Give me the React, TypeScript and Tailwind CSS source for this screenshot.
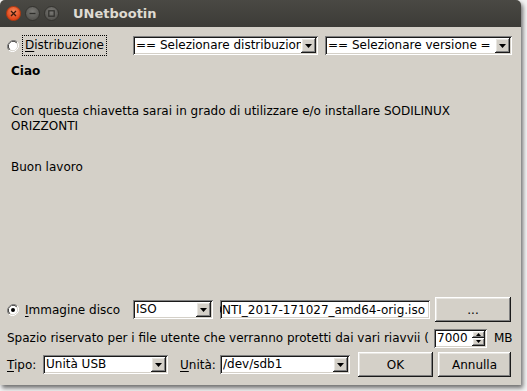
import React from 'react'

const font = "font-['DejaVu_Sans',sans-serif]"
const sunken =
  'bg-white shadow-[inset_1px_1px_#808080,inset_-1px_-1px_#ffffff,inset_2px_2px_#1a1a1a,inset_-2px_-2px_#d4d0c8]'
const raised =
  'bg-[#d4d0c8] shadow-[inset_-1px_-1px_#1a1a1a,inset_1px_1px_#ffffff,inset_-2px_-2px_#808080,inset_2px_2px_#e8e6e1]'

function Radio({ checked }: { checked?: boolean }) {
  return (
    <svg width="12" height="12" viewBox="0 0 12 12" className="shrink-0">
      <path d="M10.2 1.8A6 6 0 0 0 1.8 10.2" stroke="#808080" strokeWidth="1" fill="none" />
      <path d="M9.5 2.5A5 5 0 0 0 2.5 9.5" stroke="#1a1a1a" strokeWidth="1" fill="none" />
      <path d="M1.8 10.2A6 6 0 0 0 10.2 1.8" stroke="#ffffff" strokeWidth="1" fill="none" />
      <circle cx="6" cy="6" r="4.2" fill="#ffffff" />
      {checked && <circle cx="6" cy="6" r="2" fill="#000000" />}
    </svg>
  )
}

function Arrow() {
  return (
    <div className={`${raised} w-[15px] h-[15px] flex items-center justify-center shrink-0`}>
      <svg width="7" height="4" viewBox="0 0 7 4">
        <path d="M0 0h7L3.5 4z" fill="#000" />
      </svg>
    </div>
  )
}

function Select({ value, className }: { value: string; className?: string }) {
  return (
    <div className={`${sunken} h-[19px] flex items-center pl-[3px] pr-[2px] ${className ?? ''}`}>
      <span className="flex-1 overflow-hidden whitespace-nowrap leading-[15px]">{value}</span>
      <Arrow />
    </div>
  )
}

function Button({ label, className }: { label: string; className?: string }) {
  return (
    <div className={`${raised} h-[25px] flex items-center justify-center ${className ?? ''}`}>
      {label}
    </div>
  )
}

function TitleButton({ kind }: { kind: 'close' | 'min' | 'max' }) {
  if (kind === 'close') {
    return (
      <div className="w-[15px] h-[15px] rounded-full bg-[radial-gradient(circle_at_50%_35%,#f58a5c,#e0461a_70%)] border border-[#b8390f] flex items-center justify-center">
        <svg width="7" height="7" viewBox="0 0 7 7">
          <path d="M1 1l5 5M6 1l-5 5" stroke="#3a1a0d" strokeWidth="1.3" />
        </svg>
      </div>
    )
  }
  return (
    <div className="w-[15px] h-[15px] rounded-full bg-[radial-gradient(circle_at_50%_35%,#7a7975,#575652_70%)] border border-[#34332f] flex items-center justify-center">
      {kind === 'min' ? (
        <svg width="7" height="7" viewBox="0 0 7 7">
          <path d="M0.5 3.5h6" stroke="#2f2e2b" strokeWidth="1.3" />
        </svg>
      ) : (
        <svg width="7" height="7" viewBox="0 0 7 7">
          <rect x="0.8" y="0.8" width="5.4" height="5.4" fill="none" stroke="#2f2e2b" strokeWidth="1.2" />
        </svg>
      )}
    </div>
  )
}

export default function App() {
  return (
    <div className={`w-[527px] h-[391px] overflow-hidden bg-[#f3f3f3] ${font} text-[12px] text-black`}>
      <div className="w-[521px] h-[385px] flex flex-col rounded-t-[5px] bg-[#d4d0c8] shadow-[2px_3px_4px_rgba(0,0,0,0.55)]">
        {/* title bar */}
        <div className="h-[27px] shrink-0 rounded-t-[5px] bg-gradient-to-b from-[#4a4944] to-[#3c3b37] flex items-center pl-[6px]">
          <div className="flex items-center gap-[4px]">
            <TitleButton kind="close" />
            <TitleButton kind="min" />
            <TitleButton kind="max" />
          </div>
          <span className="ml-[14px] text-[13px] font-bold text-[#dfdbd2]">UNetbootin</span>
        </div>

        <div className="flex-1 flex flex-col px-[7px]">
          {/* distribution row */}
          <div className="mt-[9px] h-[19px] flex items-center">
            <div className="w-[126px] flex items-center">
              <Radio />
              <span className="ml-[3px] px-[2px] border border-dotted border-black leading-[19px]">
                <span className="underline underline-offset-2">D</span>istribuzione
              </span>
            </div>
            <Select value="== Selezionare distribuzione ==" className="w-[185px]" />
            <Select value="== Selezionare versione =" className="w-[187px] ml-[7px]" />
          </div>

          {/* description */}
          <div className="flex-1 pl-[4px] pt-[9px] leading-[15px]">
            <p className="font-bold">Ciao</p>
            <p className="mt-[25px]">
              Con questa chiavetta sarai in grado di utilizzare e/o installare SODILINUX
              <br />
              ORIZZONTI
            </p>
            <p className="mt-[26px]">Buon lavoro</p>
          </div>

          {/* disk image row */}
          <div className="h-[25px] flex items-center">
            <div className="w-[126px] flex items-center">
              <Radio checked />
              <span className="ml-[6px]">
                <span className="underline underline-offset-2">I</span>mmagine disco
              </span>
            </div>
            <Select value="ISO" className="w-[80px]" />
            <div className={`${sunken} ml-[7px] w-[210px] h-[19px] flex items-center justify-end pr-[5px] overflow-hidden whitespace-nowrap`}>
              SODILINUX_ORIZZONTI_2017-171027_amd64-orig.iso
            </div>
            <Button label="..." className="ml-[5px] w-[76px]" />
          </div>

          {/* persistence row */}
          <div className="mt-[7px] h-[18px] flex items-center">
            <div className="w-[427px] whitespace-nowrap">
              Spazio riservato per i file utente che verranno protetti dai vari riavvii (
            </div>
            <div className={`${sunken} w-[53px] h-[19px] flex items-center pl-[3px] pr-[2px]`}>
              <span className="flex-1">7000</span>
              <div className="flex flex-col">
                <div className={`${raised} w-[13px] h-[7.5px] flex items-center justify-center`}>
                  <svg width="5" height="3" viewBox="0 0 5 3"><path d="M0 3h5L2.5 0z" fill="#000" /></svg>
                </div>
                <div className={`${raised} w-[13px] h-[7.5px] flex items-center justify-center`}>
                  <svg width="5" height="3" viewBox="0 0 5 3"><path d="M0 0h5L2.5 3z" fill="#000" /></svg>
                </div>
              </div>
            </div>
            <span className="ml-[7px]">MB</span>
          </div>

          {/* target row */}
          <div className="mt-[5px] h-[25px] flex items-center">
            <span className="w-[36px]">
              <span className="underline underline-offset-2">T</span>ipo:
            </span>
            <Select value="Unità USB" className="w-[125px]" />
            <span className="ml-[12px] w-[40px]">
              <span className="underline underline-offset-2">U</span>nità:
            </span>
            <Select value="/dev/sdb1" className="w-[130px]" />
            <Button label="OK" className="ml-[8px] w-[75px]" />
            <Button label="Annulla" className="ml-[5px] w-[73px]" />
          </div>
          <div className="h-[8px] shrink-0" />
        </div>
      </div>
    </div>
  )
}
